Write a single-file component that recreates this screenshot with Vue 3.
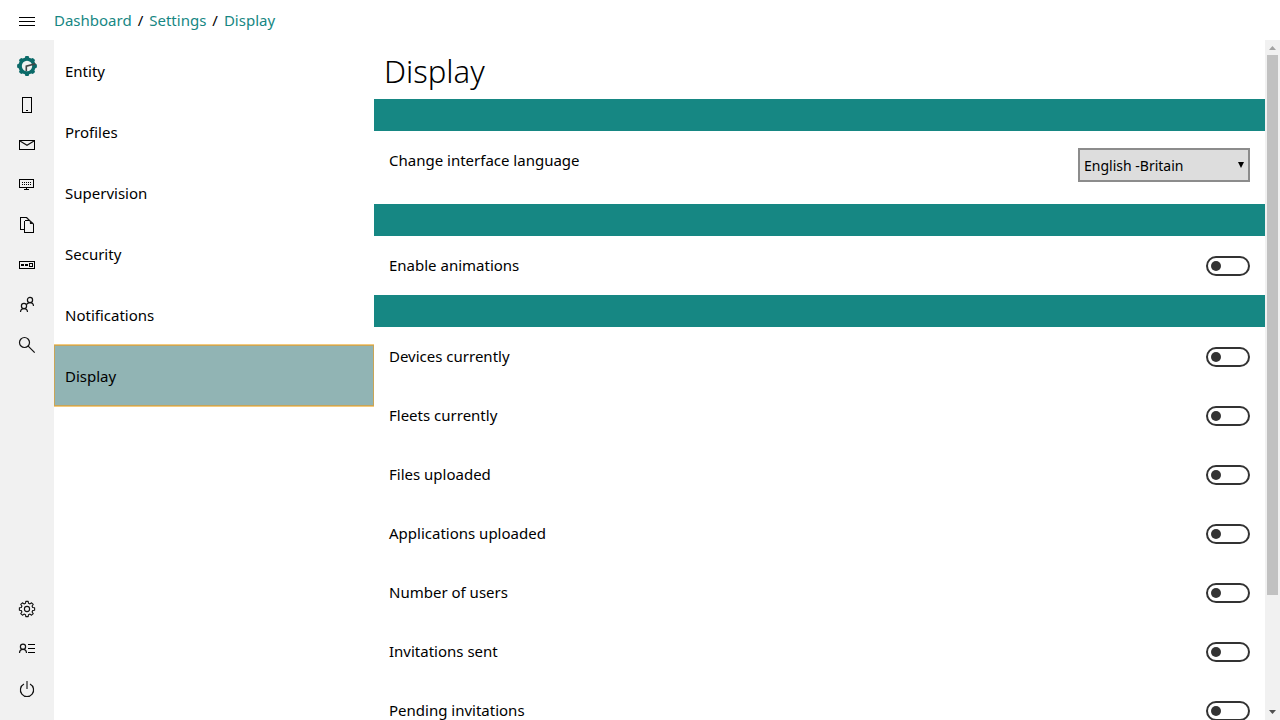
<script setup>
import { ref } from 'vue'

const crumbs = ['Dashboard', 'Settings', 'Display']
const sections = ['Entity', 'Profiles', 'Supervision', 'Security', 'Notifications', 'Display']
const language = ref('English -Britain')
const animations = ref(false)
const widgets = ref([
  { id: 'devices', label: 'Devices currently', on: false },
  { id: 'fleets', label: 'Fleets currently', on: false },
  { id: 'files', label: 'Files uploaded', on: false },
  { id: 'applications', label: 'Applications uploaded', on: false },
  { id: 'users', label: 'Number of users', on: false },
  { id: 'sent', label: 'Invitations sent', on: false },
  { id: 'pending', label: 'Pending invitations', on: false }
])

function gear(cx, cy, outer, inner, teeth) {
  const pts = []
  const step = (Math.PI * 2) / teeth
  for (let i = 0; i < teeth; i++) {
    const a = i * step - Math.PI / 2
    for (const [offset, r] of [[-0.32, inner], [-0.2, outer], [0.2, outer], [0.32, inner]]) {
      const t = a + offset * step
      pts.push(`${(cx + r * Math.cos(t)).toFixed(2)} ${(cy + r * Math.sin(t)).toFixed(2)}`)
    }
  }
  return `M${pts.join('L')}Z`
}
const logoPath = gear(12, 13, 10, 8.6, 8)
const settingsPath = gear(12, 12, 7.7, 5.9, 8)
</script>

<template>
  <div class="shell">
    <header class="topbar">
      <button class="menu" type="button" aria-label="Menu">
        <svg viewBox="0 0 24 24"><path class="crisp" d="M4 8.5H20M4 12.5H20M4 16.5H20" /></svg>
      </button>
      <nav class="crumbs">
        <template v-for="(crumb, i) in crumbs" :key="crumb">
          <span v-if="i">/</span><a href="#">{{ crumb }}</a>
        </template>
      </nav>
    </header>

    <div class="body">
      <nav class="rail">
        <button type="button" aria-label="Dashboard">
          <svg viewBox="0 0 24 24">
            <path :d="logoPath" fill="#0b6a69" stroke="none" />
            <circle cx="12" cy="13" r="5.2" fill="#f1f1f1" stroke="none" />
            <path d="M11.3 18V13.2L20.5 10.8" stroke="#444" stroke-width="1.6" />
          </svg>
        </button>
        <button type="button" aria-label="Devices">
          <svg viewBox="0 0 24 24"><path class="crisp" d="M7.5 4.5H16.5V19.5H7.5ZM11 17.5H13" /></svg>
        </button>
        <button type="button" aria-label="Messages">
          <svg viewBox="0 0 24 24"><path class="crisp" d="M4.5 7.5H19.5V16.5H4.5Z" /><path d="M5 8L12 12.2L19 8" /></svg>
        </button>
        <button type="button" aria-label="Kiosk">
          <svg viewBox="0 0 24 24">
            <path class="crisp" d="M4.5 6.5H18.5V14.5H4.5ZM11.5 15V17M9 16.5H14" />
            <path class="crisp" d="M7 9.5H17M7 11.5H17" stroke-dasharray="1 1" />
          </svg>
        </button>
        <button type="button" aria-label="Files">
          <svg viewBox="0 0 24 24">
            <path class="crisp" d="M9 16.5H5.5V4.5H11.5M9.5 7.5H15M18.5 11V19.5H9.5V7.5" />
            <path d="M11.5 4.5L14.5 7.5L18.5 11M15.5 8V10.5H18.5" />
          </svg>
        </button>
        <button type="button" aria-label="Applications">
          <svg viewBox="0 0 24 24">
            <path class="crisp" d="M4.5 8.5H19.5V15.5H4.5ZM14.5 10.5H17.5V13.5H14.5Z" />
            <path class="solid" d="M6 11H9V13H6ZM10 11H13V13H10Z" />
          </svg>
        </button>
        <button type="button" aria-label="Users">
          <svg viewBox="0 0 24 24">
            <circle cx="15" cy="7" r="2.6" /><circle cx="9" cy="13" r="2.6" />
            <path d="M5.5 19C5.6 17 7 15.6 9 15.6S12.4 17 12.5 19M11.6 11.4C12.4 10.2 13.6 9.6 15 9.6C17 9.6 18.4 11 18.5 13" />
          </svg>
        </button>
        <button type="button" aria-label="Search">
          <svg viewBox="0 0 24 24"><circle cx="9.5" cy="9.5" r="5" /><path d="M13.2 13.2L19.7 19.7" /></svg>
        </button>
        <span class="spring"></span>
        <button type="button" aria-label="Settings">
          <svg viewBox="0 0 24 24"><path :d="settingsPath" stroke-width="1.1" stroke-linejoin="round" /><circle cx="12" cy="12" r="2.6" stroke-width="1.1" /></svg>
        </button>
        <button type="button" aria-label="Account">
          <svg viewBox="0 0 24 24">
            <circle cx="8" cy="9.8" r="2.6" /><path d="M4.5 16C4.6 13.8 6 12.4 8 12.4S11.4 13.8 11.5 16" />
            <path class="crisp" d="M13 7.5H20M13 11.5H20M13 15.5H20" />
          </svg>
        </button>
        <button type="button" aria-label="Log out">
          <svg viewBox="0 0 24 24"><path d="M9 7A6.6 6.6 0 1 0 15 7" /><path d="M12 4V12" stroke="#666" stroke-width="1.8" /></svg>
        </button>
      </nav>

      <nav class="sections">
        <a v-for="name in sections" :key="name" href="#" :class="{ active: name === 'Display' }">{{ name }}</a>
      </nav>

      <main class="content">
        <h1>Display</h1>
        <div class="band"></div>
        <div class="row language">
          <label for="language">Change interface language</label>
          <div class="picker">
            <select id="language" v-model="language"><option>English -Britain</option></select>
            <svg viewBox="0 0 6 6"><path d="M0 0H6L3 6Z" /></svg>
          </div>
        </div>
        <div class="band"></div>
        <div class="row">
          <label for="animations">Enable animations</label>
          <input id="animations" v-model="animations" type="checkbox" role="switch" />
        </div>
        <div class="band"></div>
        <div v-for="w in widgets" :key="w.id" class="row">
          <label :for="w.id">{{ w.label }}</label>
          <input :id="w.id" v-model="w.on" type="checkbox" role="switch" />
        </div>
      </main>

      <div class="scrollbar" aria-hidden="true">
        <svg viewBox="0 0 15 15"><path d="M4 10L7.5 6L11 10Z" fill="#a3a3a3" /></svg>
        <div class="track"><div class="thumb"></div></div>
        <svg viewBox="0 0 15 15"><path d="M4 5L11 5L7.5 9Z" fill="#505050" /></svg>
      </div>
    </div>
  </div>
</template>

<style>
body { margin: 0; background: #fff; }
</style>

<style scoped>
.shell {
  height: 100vh;
  display: flex;
  flex-direction: column;
  overflow: hidden;
  font: 15px/20px "Noto Sans", "Open Sans", sans-serif;
  color: #000;
}
a { color: inherit; text-decoration: none; }
button { padding: 0; border: 0; background: none; display: grid; place-items: center; cursor: pointer; }
button svg { width: 24px; height: 24px; fill: none; stroke: #111; stroke-width: 1.2; }
.crisp { shape-rendering: crispEdges; stroke: #000; stroke-width: 1; }
.solid { shape-rendering: crispEdges; fill: #000; stroke: none; }
.topbar { flex: none; height: 40px; display: flex; align-items: center; }
.menu { width: 54px; height: 40px; padding-top: 1px; }
.crumbs { display: flex; gap: 6px; }
.crumbs a { color: #168783; }
.body { flex: 1; min-height: 0; display: flex; }
.rail {
  flex: none;
  width: 54px;
  box-sizing: border-box;
  padding: 5px 0 11px;
  display: flex;
  flex-direction: column;
  background: #f1f1f1;
}
.rail button { height: 40px; }
.spring { flex: 1; }
.sections { flex: none; width: 320px; }
.sections a {
  display: flex;
  align-items: center;
  height: 61px;
  box-sizing: border-box;
  padding: 0 11px 0 10px;
  border: 1px solid transparent;
}
.sections .active {
  background: #91b4b4;
  border-color: #c9a557;
  box-shadow: 0 -1px #f3ca7e, 0 1px #f3ca7e;
}
.content { flex: 1; min-width: 0; overflow-y: auto; scrollbar-width: none; }
h1 { margin: 0; padding: 9px 10px 6px; font: 300 31px/44px "Noto Sans", "Open Sans", sans-serif; }
.band { height: 32px; background: #168783; }
.row {
  display: flex;
  align-items: center;
  justify-content: space-between;
  height: 59px;
  box-sizing: border-box;
  padding: 0 15px;
}
.row label { padding-bottom: 2px; }
.language { height: 73px; align-items: flex-start; padding-top: 17px; }
.language label { margin-top: 2px; }
.picker { position: relative; }
select {
  appearance: none;
  display: block;
  width: 172px;
  height: 34px;
  padding: 2px 4px 0;
  border: 2px solid #8c8c8c;
  border-radius: 0;
  background: #ddd;
  color: #000;
  font: 14px/20px "Noto Sans", "Open Sans", sans-serif;
}
.picker svg { position: absolute; right: 6px; top: 14px; width: 6px; height: 6px; pointer-events: none; }
input {
  appearance: none;
  display: flex;
  align-items: center;
  width: 44px;
  height: 20px;
  box-sizing: border-box;
  margin: 0;
  padding: 0 3px;
  border: 2px solid #333;
  border-radius: 10px;
  background: #fff;
}
input::before { content: ""; width: 10px; height: 10px; border-radius: 50%; background: #333; }
input:checked { justify-content: flex-end; }
.scrollbar { flex: none; width: 15px; display: flex; flex-direction: column; background: #f1f1f1; }
.scrollbar svg { width: 15px; height: 15px; }
.track { flex: 1; padding: 0 2px; }
.thumb { height: 83%; background: #c1c1c1; }
</style>
